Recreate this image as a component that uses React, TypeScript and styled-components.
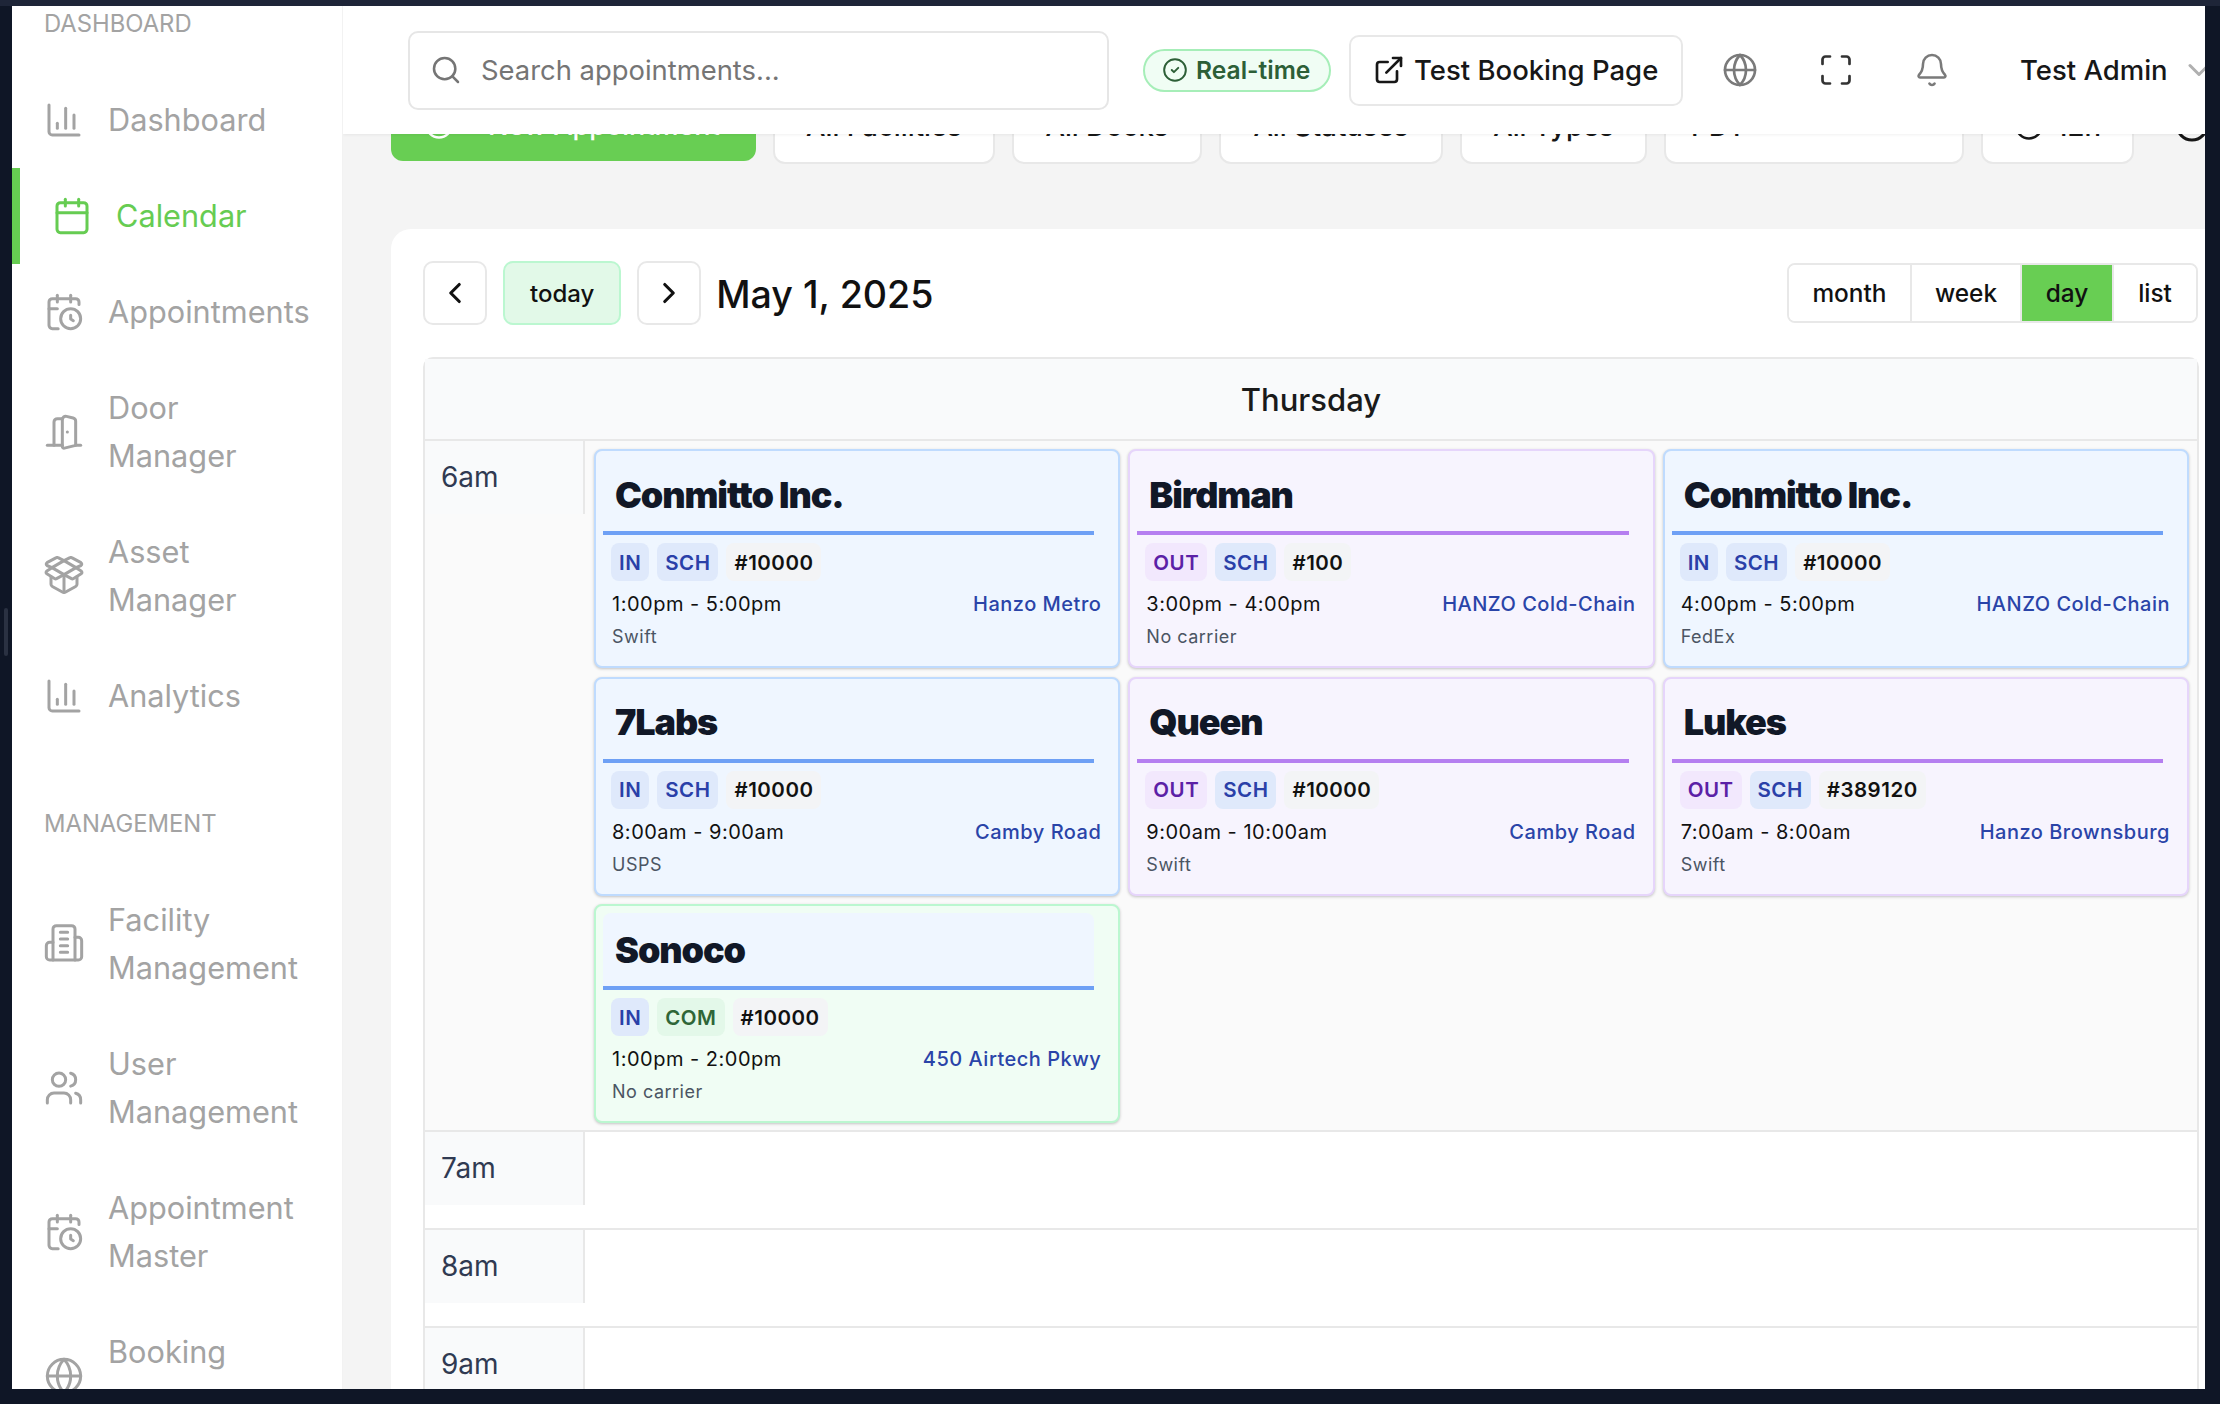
import React from "react";
import styled, { createGlobalStyle } from "styled-components";
import {
  ChartColumn, Calendar, CalendarClock, DoorOpen, Users, Globe,
  Search, CircleCheck, ExternalLink, Maximize, Bell, ChevronDown, ChevronLeft, ChevronRight, CirclePlus, Clock,
} from "lucide-react";

const Global = createGlobalStyle`
  html, body { margin: 0; padding: 0; background: #0f1626; }
  * { box-sizing: border-box; }
`;

const Screen = styled.div`
  position: relative;
  width: 2220px;
  height: 1404px;
  overflow: hidden;
  background: #0f1626;
  border-top: 6px solid #1e2538;
  padding: 0 15px 15px 12px;
  font-family: Inter, "Liberation Sans", sans-serif;
`;

const Handle = styled.div`
  position: absolute;
  left: 4px;
  top: 602px;
  width: 4px;
  height: 48px;
  border-radius: 2px;
  background: #2a3142;
`;

const Windowed = styled.div`
  display: flex;
  height: 100%;
  overflow: hidden;
  background: #f4f4f4;
`;

const Sidebar = styled.aside`
  flex: 0 0 331px;
  background: #fff;
  border-right: 1px solid #f2f2f2;
  padding-top: 2px;
  overflow: hidden;
  position: relative;
  z-index: 2;
`;

const SectionTitle = styled.div<{ $top: number; $bottom: number }>`
  height: 32px;
  line-height: 32px;
  margin: ${(p) => p.$top}px 0 ${(p) => p.$bottom}px;
  padding-left: 32px;
  font-size: 23.8px;
  font-weight: 400;
  color: #a3a3a3;
`;

const NavItem = styled.div<{ $active?: boolean }>`
  display: flex;
  align-items: center;
  gap: 24px;
  padding: 24px 16px 24px 32px;
  border-left: ${(p) => (p.$active ? "8px solid #66cc52" : "0")};
  color: ${(p) => (p.$active ? "#66cc52" : "#a3a3a3")};
  font-size: 30.7px;
  line-height: 48px;
  svg { flex: 0 0 40px; }
`;

const Main = styled.div`
  flex: 1;
  min-width: 0;
  display: flex;
  flex-direction: column;
  overflow: hidden;
`;

const Header = styled.header`
  flex: 0 0 128px;
  display: flex;
  align-items: center;
  position: relative;
  z-index: 1;
  padding-left: 65px;
  background: #fff;
  box-shadow: 0 1px 3px rgba(0, 0, 0, 0.06);
  white-space: nowrap;
`;

const SearchBox = styled.div`
  flex: 0 0 701px;
  height: 79px;
  display: flex;
  align-items: center;
  gap: 19px;
  padding-left: 20px;
  border: 2px solid #e6e6e6;
  border-radius: 10px;
  font-size: 27.4px;
  color: #757575;
`;

const LivePill = styled.div`
  flex: 0 0 188px;
  display: flex;
  align-items: center;
  gap: 8px;
  height: 43px;
  margin-left: 34px;
  padding-left: 17px;
  border: 2px solid #a6eeb8;
  border-radius: 22px;
  background: #f0fdf4;
  color: #2d5f37;
  font-size: 24.6px;
  font-weight: 600;
`;

const BookingLink = styled.div`
  flex: 0 0 334px;
  display: flex;
  align-items: center;
  gap: 9px;
  height: 71px;
  margin-left: 18px;
  padding-left: 22px;
  border: 2px solid #e8e8e8;
  border-radius: 10px;
  color: #171717;
  font-size: 27.5px;
  font-weight: 500;
`;

const HeadIcon = styled.div<{ $left: number; $color?: string }>`
  display: flex;
  margin-left: ${(p) => p.$left}px;
  color: ${(p) => p.$color ?? "#7a7a7a"};
`;

const UserName = styled.div`
  margin-left: 70px;
  color: #171717;
  font-size: 27.5px;
  font-weight: 500;
`;

const FilterRow = styled.div`
  display: flex;
  flex: 0 0 auto;
  gap: 17px;
  margin-top: -41px;
  padding-left: 48px;
  height: 71px;
  white-space: nowrap;
`;

const PrimaryFilter = styled.div`
  flex: 0 0 365px;
  height: 68px;
  display: flex;
  align-items: center;
  gap: 34px;
  padding: 0 0 4px 33px;
  border-radius: 12px;
  background: #68ce53;
  color: #fff;
  font-size: 27px;
  font-weight: 500;
`;

const Filter = styled.div<{ $w: number; $start?: boolean }>`
  flex: 0 0 ${(p) => p.$w}px;
  display: flex;
  align-items: center;
  justify-content: ${(p) => (p.$start ? "flex-start" : "center")};
  gap: 12px;
  padding: 0 0 6px ${(p) => (p.$start ? 25 : 0)}px;
  border: 2px solid #e8e8e8;
  border-radius: 12px;
  background: #fff;
  color: #171717;
  font-size: 27.5px;
  font-weight: 500;
`;

const IconOnly = styled.div`
  display: flex;
  align-items: center;
  margin-left: 23px;
  padding-bottom: 8px;
  color: #171717;
`;

const CalendarCard = styled.section`
  flex: 1;
  margin: 65px 0 0 48px;
  padding: 32px 6px 0 32px;
  background: #fff;
  border-radius: 20px 0 0 0;
  overflow: hidden;
`;

const Toolbar = styled.div`
  display: flex;
  align-items: center;
  height: 64px;
  margin-bottom: 32px;
`;

const NavButton = styled.div<{ $tinted?: boolean; $gap?: number }>`
  height: 64px;
  min-width: 64px;
  display: flex;
  align-items: center;
  justify-content: center;
  margin-right: ${(p) => p.$gap ?? 16}px;
  padding: ${(p) => (p.$tinted ? "0 25px" : "0")};
  border: 2px solid ${(p) => (p.$tinted ? "#bbf7d0" : "#e8e8e8")};
  border-radius: 10px;
  background: ${(p) => (p.$tinted ? "#e2f9e8" : "#fff")};
  color: #111;
  font-size: 24px;
  font-weight: 500;
`;

const DateTitle = styled.h2`
  flex: 1;
  margin: 2px 0 0 15px;
  font-size: 37.6px;
  font-weight: 500;
  color: #111;
`;

const ViewGroup = styled.div`
  display: flex;
  height: 60px;
  margin-right: 1px;
  border: 2px solid #e8e8e8;
  border-radius: 8px;
  overflow: hidden;
`;

const ViewButton = styled.div<{ $w: number; $on?: boolean }>`
  flex: 0 0 ${(p) => p.$w}px;
  display: flex;
  align-items: center;
  justify-content: center;
  border-right: 2px solid #e8e8e8;
  background: ${(p) => (p.$on ? "#68ce53" : "#fff")};
  color: #111;
  font-size: 24.4px;
  font-weight: 500;
  &:last-child { border-right: 0; }
`;

const Grid = styled.div`
  border: 2px solid #e8e8e8;
  border-bottom: 0;
  border-radius: 10px 10px 0 0;
`;

const DayHeader = styled.div`
  height: 82px;
  display: flex;
  align-items: center;
  justify-content: center;
  background: #f9fafb;
  border-bottom: 2px solid #e8e8e8;
  font-size: 31px;
  font-weight: 500;
  color: #1a1a1a;
`;

const HourRow = styled.div<{ $h: number; $busy?: boolean }>`
  display: flex;
  height: ${(p) => p.$h}px;
  background: ${(p) => (p.$busy ? "#fafafa" : "#fff")};
  border-bottom: 2px solid #e8e8e8;
`;

const HourLabel = styled.div`
  flex: 0 0 160px;
  height: 73px;
  padding: 16px 0 0 16px;
  background: #f9fafb;
  border-right: 2px solid #e8e8e8;
  font-size: 28px;
  line-height: 40px;
  color: #303a52;
`;

const Lane = styled.div`
  flex: 1;
  min-width: 0;
  display: grid;
  grid-template-columns: repeat(3, 1fr);
  grid-auto-rows: 219px;
  gap: 8.5px 8px;
  padding: 8px 8px 0 9px;
`;

const tones = {
  in: { bg: "#eff6ff", border: "#bfdbfe" },
  out: { bg: "#f7f4fe", border: "#e6d5fb" },
  done: { bg: "#f0fdf4", border: "#bbf7d0" },
};

const EventCard = styled.article<{ $tone: keyof typeof tones }>`
  padding: 7px 0 0 7px;
  border: 2px solid ${(p) => tones[p.$tone].border};
  border-radius: 8px;
  background: ${(p) => tones[p.$tone].bg};
  box-shadow: 0 1px 3px rgba(0, 0, 0, 0.22);
  min-width: 0;
`;

const EventTitle = styled.div<{ $dir: "in" | "out" }>`
  height: 77px;
  width: calc(100% - 24px);
  padding-left: 12px;
  display: flex;
  align-items: center;
  border-bottom: 4px solid ${(p) => (p.$dir === "in" ? "#6ea0f5" : "#b57ff0")};
  border-radius: 8px 8px 0 0;
  background: ${(p) => (p.$dir === "in" ? "#eff6ff" : "#f7f4fe")};
  color: #111827;
  font-size: 36px;
  font-weight: 900;
  letter-spacing: -1.1px;
`;

const BadgeRow = styled.div`
  display: flex;
  gap: 8px;
  margin: 8px 0 0 8px;
`;

const badgeTones = {
  blue: { bg: "#dfe9fb", fg: "#2a40a8" },
  purple: { bg: "#f2e8fd", fg: "#5b21a6" },
  green: { bg: "#e3f8e9", fg: "#2f6638" },
  gray: { bg: "#f3f4f6", fg: "#111111" },
};

const Badge = styled.span<{ $tone: keyof typeof badgeTones }>`
  height: 38px;
  display: flex;
  align-items: center;
  padding: 0 8px;
  border-radius: 8px;
  background: ${(p) => badgeTones[p.$tone].bg};
  color: ${(p) => badgeTones[p.$tone].fg};
  font-size: 20.5px;
  font-weight: 600;
  letter-spacing: 0.5px;
`;

const TimeRow = styled.div`
  display: flex;
  justify-content: space-between;
  align-items: center;
  height: 30px;
  margin: 8px 17px 0 9px;
  font-size: 20px;
  color: #111;
  letter-spacing: 0.5px;
`;

const Place = styled.span`
  color: #2a44a8;
  font-weight: 500;
`;

const Carrier = styled.div`
  margin: 5px 0 0 9px;
  font-size: 18px;
  line-height: 26px;
  color: #4b5563;
  letter-spacing: 0.5px;
`;

type Ev = {
  name: string; dir: "in" | "out"; tone: keyof typeof tones; status: string; num: string;
  time: string; place: string; carrier: string;
};

const events: Ev[] = [
  { name: "Conmitto Inc.", dir: "in", tone: "in", status: "SCH", num: "#10000", time: "1:00pm - 5:00pm", place: "Hanzo Metro", carrier: "Swift" },
  { name: "Birdman", dir: "out", tone: "out", status: "SCH", num: "#100", time: "3:00pm - 4:00pm", place: "HANZO Cold-Chain", carrier: "No carrier" },
  { name: "Conmitto Inc.", dir: "in", tone: "in", status: "SCH", num: "#10000", time: "4:00pm - 5:00pm", place: "HANZO Cold-Chain", carrier: "FedEx" },
  { name: "7Labs", dir: "in", tone: "in", status: "SCH", num: "#10000", time: "8:00am - 9:00am", place: "Camby Road", carrier: "USPS" },
  { name: "Queen", dir: "out", tone: "out", status: "SCH", num: "#10000", time: "9:00am - 10:00am", place: "Camby Road", carrier: "Swift" },
  { name: "Lukes", dir: "out", tone: "out", status: "SCH", num: "#389120", time: "7:00am - 8:00am", place: "Hanzo Brownsburg", carrier: "Swift" },
  { name: "Sonoco", dir: "in", tone: "done", status: "COM", num: "#10000", time: "1:00pm - 2:00pm", place: "450 Airtech Pkwy", carrier: "No carrier" },
];

const Event = ({ e }: { e: Ev }) => (
  <EventCard $tone={e.tone}>
    <EventTitle $dir={e.dir}>{e.name}</EventTitle>
    <BadgeRow>
      <Badge $tone={e.dir === "in" ? "blue" : "purple"}>{e.dir === "in" ? "IN" : "OUT"}</Badge>
      <Badge $tone={e.status === "COM" ? "green" : "blue"}>{e.status}</Badge>
      <Badge $tone="gray">{e.num}</Badge>
    </BadgeRow>
    <TimeRow>
      <span>{e.time}</span>
      <Place>{e.place}</Place>
    </TimeRow>
    <Carrier>{e.carrier}</Carrier>
  </EventCard>
);

const AssetIcon = ({ size }: { size: number }) => (
  <svg width={size} height={size} viewBox="0 0 24 24" fill="none" stroke="currentColor" strokeWidth="1.8" strokeLinecap="round" strokeLinejoin="round">
    <path d="M12 2.8 4.8 7l7.2 4.2L19.2 7z" />
    <path d="M12 2.8 8.4 1a1 1 0 0 0-1 0L1.8 4a1 1 0 0 0 0 1.7L4.8 7" />
    <path d="M12 2.8 15.6 1a1 1 0 0 1 1 0L22.2 4a1 1 0 0 1 0 1.7L19.2 7" />
    <path d="M4.8 7 1.7 9a1 1 0 0 0 0 1.7l4.8 2.9a1 1 0 0 0 1 0l4.5-2.4" />
    <path d="M19.2 7l3.1 2a1 1 0 0 1 0 1.7l-4.8 2.9a1 1 0 0 1-1 0L12 11.2" />
    <path d="M4.2 12.4V17a1.5 1.5 0 0 0 .8 1.3l6 3.3a2 2 0 0 0 2 0l6-3.3a1.5 1.5 0 0 0 .8-1.3v-4.6" />
    <path d="M12 11.2v10.6" />
  </svg>
);

const FacilityIcon = ({ size }: { size: number }) => (
  <svg width={size} height={size} viewBox="0 0 24 24" fill="none" stroke="currentColor" strokeWidth="1.8" strokeLinecap="round" strokeLinejoin="round">
    <path d="M5.4 21.6V3a2 2 0 0 1 2-2h9.2a2 2 0 0 1 2 2v18.6" />
    <path d="M5.4 11h-2a2 2 0 0 0-2 2v6.6a2 2 0 0 0 2 2h17.2a2 2 0 0 0 2-2V10a2 2 0 0 0-2-2h-2" />
    <path d="M9.8 5h4.4M9.8 9h4.4M9.8 13h4.4M9.8 17h4.4" />
  </svg>
);

const Item = ({ icon: I, active, children }: { icon: React.ElementType; active?: boolean; children: React.ReactNode }) => (
  <NavItem $active={active}>
    <I size={40} strokeWidth={1.8} />
    <span>{children}</span>
  </NavItem>
);

export default function App() {
  return (
    <Screen>
      <Global />
      <Handle />
      <Windowed>
        <Sidebar>
          <SectionTitle $top={0} $bottom={32}>DASHBOARD</SectionTitle>
          <Item icon={ChartColumn}>Dashboard</Item>
          <Item icon={Calendar} active>Calendar</Item>
          <Item icon={CalendarClock}>Appointments</Item>
          <Item icon={DoorOpen}>Door<br />Manager</Item>
          <Item icon={AssetIcon}>Asset<br />Manager</Item>
          <Item icon={ChartColumn}>Analytics</Item>
          <SectionTitle $top={64} $bottom={32}>MANAGEMENT</SectionTitle>
          <Item icon={FacilityIcon}>Facility<br />Management</Item>
          <Item icon={Users}>User<br />Management</Item>
          <Item icon={CalendarClock}>Appointment<br />Master</Item>
          <Item icon={Globe}>Booking<br />&nbsp;</Item>
        </Sidebar>
        <Main>
          <Header>
            <SearchBox>
              <Search size={32} strokeWidth={1.9} />
              <span>Search appointments...</span>
            </SearchBox>
            <LivePill>
              <CircleCheck size={26} strokeWidth={1.8} />
              <span>Real-time</span>
            </LivePill>
            <BookingLink>
              <ExternalLink size={32} strokeWidth={2} />
              <span>Test Booking Page</span>
            </BookingLink>
            <HeadIcon $left={39}><Globe size={36} strokeWidth={1.8} /></HeadIcon>
            <HeadIcon $left={60} $color="#333"><Maximize size={36} strokeWidth={1.8} /></HeadIcon>
            <HeadIcon $left={60}><Bell size={36} strokeWidth={1.7} /></HeadIcon>
            <UserName>Test Admin</UserName>
            <HeadIcon $left={13} $color="#b0b0b0"><ChevronDown size={36} strokeWidth={2} /></HeadIcon>
          </Header>
          <FilterRow>
            <PrimaryFilter>
              <CirclePlus size={30} />
              <span>New Appointment</span>
            </PrimaryFilter>
            <Filter $w={222}>All Facilities</Filter>
            <Filter $w={190}>All Docks</Filter>
            <Filter $w={224}>All Statuses</Filter>
            <Filter $w={187}>All Types</Filter>
            <Filter $w={300} $start>PDT</Filter>
            <Filter $w={153}><Clock size={30} strokeWidth={2} /><span>12h</span></Filter>
            <IconOnly><Clock size={36} strokeWidth={2} /></IconOnly>
          </FilterRow>
          <CalendarCard>
            <Toolbar>
              <NavButton><ChevronLeft size={34} strokeWidth={2.2} /></NavButton>
              <NavButton $tinted><span>today</span></NavButton>
              <NavButton $gap={0}><ChevronRight size={34} strokeWidth={2.2} /></NavButton>
              <DateTitle>May 1, 2025</DateTitle>
              <ViewGroup>
                <ViewButton $w={123}>month</ViewButton>
                <ViewButton $w={110}>week</ViewButton>
                <ViewButton $w={92} $on>day</ViewButton>
                <ViewButton $w={82}>list</ViewButton>
              </ViewGroup>
            </Toolbar>
            <Grid>
              <DayHeader>Thursday</DayHeader>
              <HourRow $h={691} $busy>
                <HourLabel>6am</HourLabel>
                <Lane>
                  {events.map((e, i) => <Event key={i} e={e} />)}
                </Lane>
              </HourRow>
              <HourRow $h={98}><HourLabel>7am</HourLabel></HourRow>
              <HourRow $h={98}><HourLabel>8am</HourLabel></HourRow>
              <HourRow $h={98}><HourLabel>9am</HourLabel></HourRow>
            </Grid>
          </CalendarCard>
        </Main>
      </Windowed>
    </Screen>
  );
}
